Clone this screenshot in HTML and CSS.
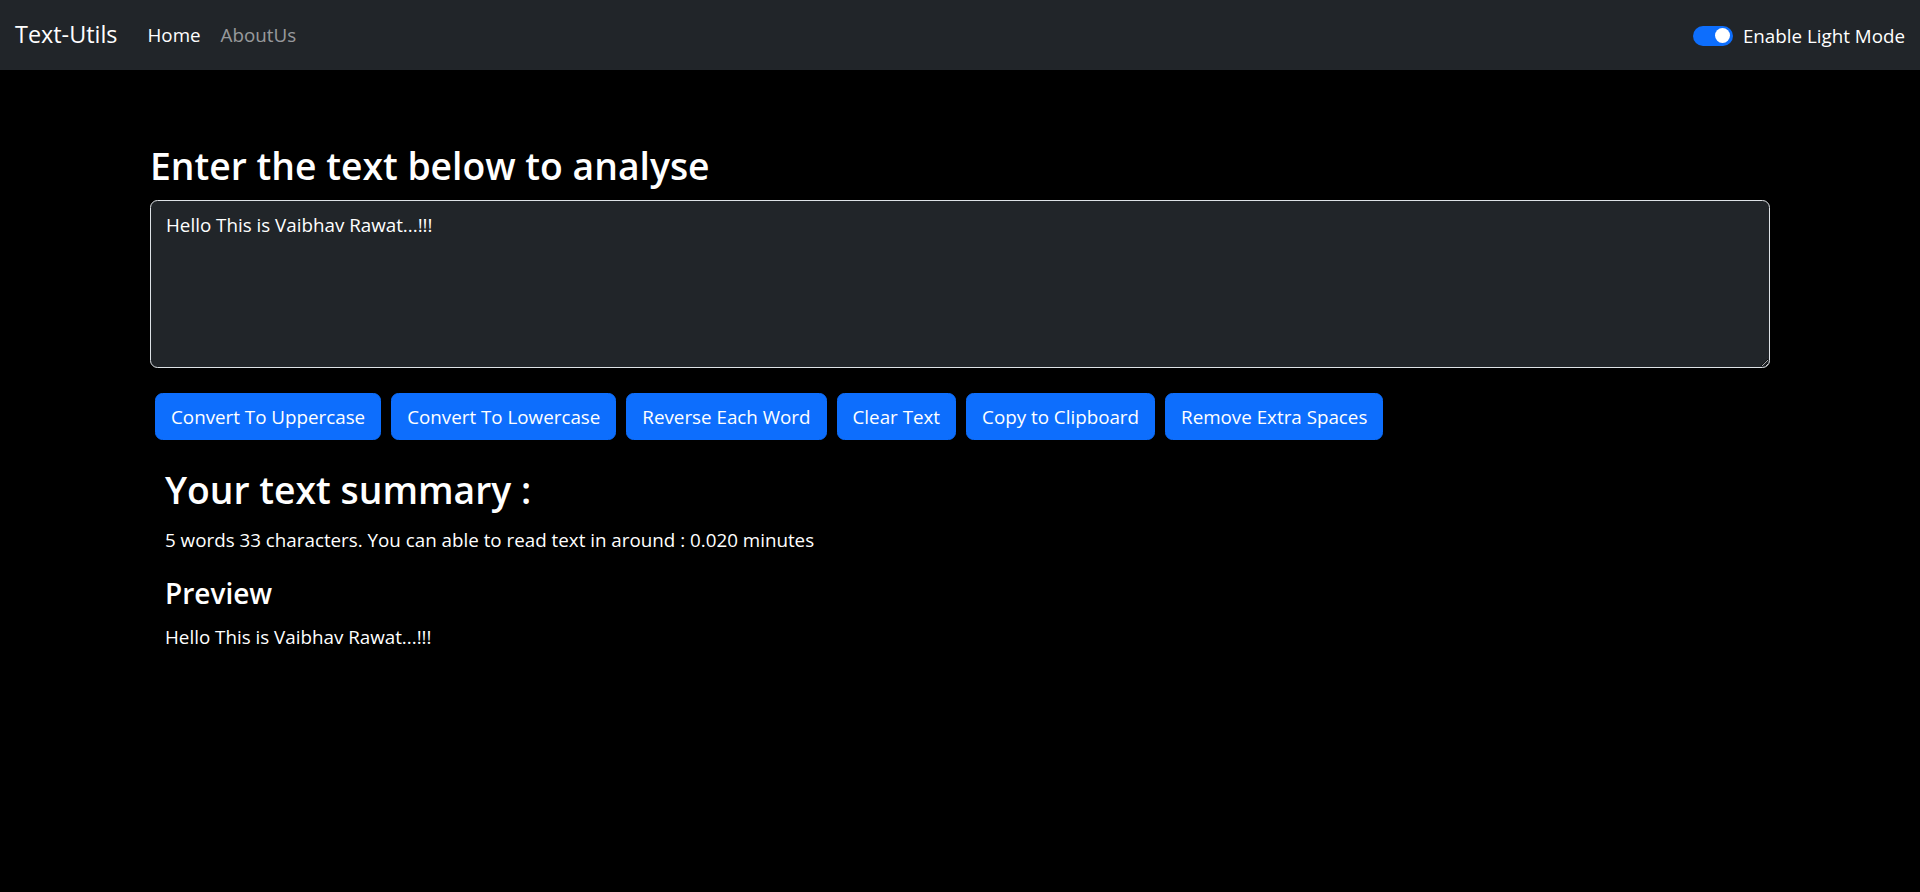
FILE: index.html
```html
<!DOCTYPE html>
<html lang="en">
<head>
<meta charset="utf-8">
<title>Text-Utils</title>
<link rel="stylesheet" href="styles.css">
</head>
<body>
<nav class="navbar">
  <div class="nav-left">
    <a class="brand" href="#">Text-Utils</a>
    <ul class="nav-links">
      <li><a class="nav-link active" href="#">Home</a></li>
      <li><a class="nav-link" href="#">AboutUs</a></li>
    </ul>
  </div>
  <div class="mode-switch">
    <span class="switch"><span class="knob"></span></span>
    <span class="switch-label">Enable Light Mode</span>
  </div>
</nav>
<main class="container">
  <h1 class="title">Enter the text below to analyse</h1>
  <textarea class="text-box" rows="5">Hello This is Vaibhav Rawat...!!!</textarea>
  <div class="actions">
    <button class="btn">Convert To Uppercase</button>
    <button class="btn">Convert To Lowercase</button>
    <button class="btn">Reverse Each Word</button>
    <button class="btn">Clear Text</button>
    <button class="btn">Copy to Clipboard</button>
    <button class="btn">Remove Extra Spaces</button>
  </div>
  <section class="summary">
    <h2 class="summary-title">Your text summary :</h2>
    <p class="summary-text">5 words 33 characters. You can able to read text in around : 0.020 minutes</p>
    <h4 class="preview-title">Preview</h4>
    <p class="preview-text">Hello This is Vaibhav Rawat...!!!</p>
  </section>
</main>
</body>
</html>
```

FILE: styles.css
```css
html, body {
  margin: 0;
  padding: 0;
  background: #000;
  color: #fff;
  font-family: "Open Sans", "Noto Sans", sans-serif;
}

.navbar {
  height: 70px;
  box-sizing: border-box;
  background: #212529;
  display: flex;
  align-items: center;
  justify-content: space-between;
  padding: 0 15px;
}

.nav-left {
  display: flex;
  align-items: center;
}

.brand {
  font-size: 23.4px;
  line-height: 37.5px;
  padding: 6.25px 0;
  margin-right: 20px;
  color: #fff;
  text-decoration: none;
}

.nav-links {
  display: flex;
  list-style: none;
  margin: 0;
  padding: 0;
}

.nav-link {
  display: block;
  padding: 10px;
  font-size: 18.8px;
  line-height: 30px;
  color: rgba(255, 255, 255, 0.55);
  text-decoration: none;
}

.nav-link.active {
  color: #fff;
}

.mode-switch {
  display: flex;
  align-items: center;
  gap: 10px;
  padding-top: 1px;
}

.switch {
  width: 40px;
  height: 20px;
  box-sizing: border-box;
  border-radius: 10px;
  background: #0d6efd;
  display: flex;
  justify-content: flex-end;
  align-items: center;
  padding: 0 2.5px;
}

.knob {
  width: 15px;
  height: 15px;
  border-radius: 50%;
  background: #fff;
}

.switch-label {
  font-size: 18.8px;
  line-height: 30px;
  color: #fff;
}

.container {
  width: 1650px;
  margin: 0 auto;
  padding: 72px 15px 0;
  box-sizing: border-box;
}

.title {
  font-size: 37.3px;
  line-height: 48px;
  font-weight: 600;
  margin: 0 0 10px;
}

.text-box {
  display: block;
  width: 100%;
  height: 167.5px;
  box-sizing: border-box;
  padding: 8.5px 15px 6.5px;
  font-family: "Open Sans", "Noto Sans", sans-serif;
  font-size: 18.8px;
  line-height: 30px;
  background: #212529;
  color: #fff;
  border: 1.25px solid #dee2e6;
  border-radius: 7.5px;
  margin: 0 0 20px;
  outline: none;
}

.actions {
  display: flex;
  gap: 10px;
  padding: 5px;
}

.btn {
  font-family: "Open Sans", "Noto Sans", sans-serif;
  font-size: 18.8px;
  line-height: 30px;
  padding: 8.5px 15px 6.5px;
  border: 1.25px solid #0d6efd;
  background: #0d6efd;
  color: #fff;
  border-radius: 7.5px;
  cursor: pointer;
}

.summary {
  margin-top: 21.5px;
  padding: 0 15px;
}

.summary-title {
  font-size: 37.3px;
  line-height: 48px;
  font-weight: 600;
  margin: 0 0 10px;
}

.summary-text {
  font-size: 18.8px;
  line-height: 30px;
  padding-top: 1px;
  margin: 0 0 19px;
}

.preview-title {
  font-size: 28px;
  line-height: 36px;
  font-weight: 600;
  padding-top: 1px;
  margin: 0 0 10px;
}

.preview-text {
  font-size: 18.8px;
  line-height: 30px;
  padding-top: 1px;
  margin: 0;
}
```
